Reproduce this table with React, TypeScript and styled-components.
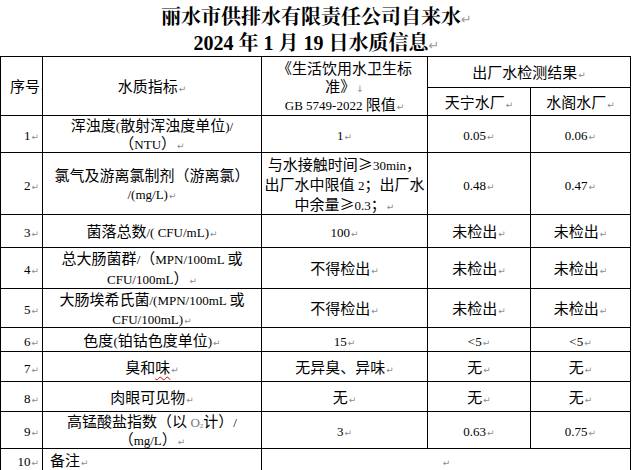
import React from "react";
import styled, { createGlobalStyle } from "styled-components";

const GlobalStyle = createGlobalStyle`
    html, body {
        margin: 0;
        padding: 0;
        background: #fff;
    }
    body {
        font-family: "Noto Sans CJK SC", sans-serif;
        color: #000;
    }
`;

const Page = styled.div`
    width: 633px;
    height: 470px;
    overflow: hidden;
`;

const Title = styled.h1`
    margin: 0;
    padding-top: 4px;
    text-align: center;
    font-family: "Liberation Serif", "Noto Serif CJK SC", "Noto Sans CJK SC", serif;
    font-size: 20px;
    font-weight: 700;
    line-height: 26px;
    height: 52px;
`;

const TitleMark = styled.span`
    font-family: "DejaVu Sans", sans-serif;
    font-size: 13px;
    font-weight: 400;
    line-height: 1;
    color: #9a9a9a;
`;

const Table = styled.table`
    border-collapse: collapse;
    table-layout: fixed;
    width: 630px;
    font-size: 15px;
`;

const Tr = styled.tr<{ $h: number }>`
    height: ${props => props.$h}px;
`;

const Td = styled.td<{ $align?: string; $lh?: number; $pad?: string }>`
    border: 1px solid #000;
    padding: ${props => props.$pad ?? "0 2px"};
    text-align: ${props => props.$align ?? "center"};
    vertical-align: middle;
    line-height: ${props => props.$lh ?? 18}px;
    white-space: nowrap;
    overflow: hidden;
`;

const Latin = styled.span`
    font-family: "Liberation Serif", serif;
    font-size: 13px;
    line-height: 1;
`;

const Mark = styled.span`
    font-family: "DejaVu Sans", sans-serif;
    font-size: 9px;
    line-height: 1;
    color: #8c8c8c;
    margin-left: 1px;
`;

const Squiggle = styled.span`
    text-decoration: underline wavy #e00000;
    text-decoration-thickness: 1px;
    text-underline-offset: 3px;
`;

const Sub = styled.span`
    color: #777;
`;

const Sub2 = styled.sub`
    font-family: "Liberation Serif", serif;
    font-size: 7px;
    line-height: 1;
    vertical-align: -1px;
`;

// split a string into latin / cjk runs so ascii gets the smaller serif face
const txt = (s: string) =>
    s.split(/([\x20-\x7e]+)/).map((part, i) =>
        /^[\x20-\x7e]+$/.test(part) ? <Latin key={i}>{part}</Latin> : part
    );

const Lines: React.FC<{ lines: React.ReactNode[]; mark?: string }> = ({ lines, mark = "↵" }) => (
    <>
        {lines.map((l, i) => (
            <React.Fragment key={i}>
                {i > 0 && <br />}
                {typeof l === "string" ? txt(l) : l}
            </React.Fragment>
        ))}
        {mark && <Mark>{mark}</Mark>}
    </>
);

type Row = {
    no: string;
    name: React.ReactNode[];
    limit: React.ReactNode[];
    a: string;
    b: string;
    h: number;
    lh?: number;
    limitLh?: number;
};

const rows: Row[] = [
    { no: "1", name: ["浑浊度(散射浑浊度单位)/", "（NTU）"], limit: ["1"], a: "0.05", b: "0.06", h: 36 },
    {
        no: "2",
        name: ["氯气及游离氯制剂（游离氯）", "/(mg/L)"],
        limit: ["与水接触时间≥30min，", "出厂水中限值 2；出厂水", "中余量≥0.3；"],
        a: "0.48",
        b: "0.47",
        h: 62,
        limitLh: 20,
    },
    { no: "3", name: ["菌落总数/( CFU/mL)"], limit: ["100"], a: "未检出", b: "未检出", h: 33 },
    { no: "4", name: ["总大肠菌群/（MPN/100mL 或", "CFU/100mL）"], limit: ["不得检出"], a: "未检出", b: "未检出", h: 40, lh: 20 },
    { no: "5", name: ["大肠埃希氏菌/(MPN/100mL 或", "CFU/100mL)"], limit: ["不得检出"], a: "未检出", b: "未检出", h: 39, lh: 19 },
    { no: "6", name: ["色度(铂钴色度单位)"], limit: ["15"], a: "<5", b: "<5", h: 24 },
    {
        no: "7",
        name: [<React.Fragment key="s">臭和<Squiggle>味</Squiggle></React.Fragment>],
        limit: ["无异臭、异味"],
        a: "无",
        b: "无",
        h: 30,
    },
    { no: "8", name: ["肉眼可见物"], limit: ["无"], a: "无", b: "无", h: 30 },
    {
        no: "9",
        name: [
            <React.Fragment key="o">
                高锰酸盐指数（以 <Sub><Latin>O</Latin><Sub2>2</Sub2></Sub>计）<Latin>/</Latin>
            </React.Fragment>,
            "（mg/L）",
        ],
        limit: ["3"],
        a: "0.63",
        b: "0.75",
        h: 37,
    },
];

export default function App() {
    return (
        <Page>
            <GlobalStyle />
            <Title>
                丽水市供排水有限责任公司自来水<TitleMark>↵</TitleMark>
                <br />
                2024 年 1 月 19 日水质信息<TitleMark>↵</TitleMark>
            </Title>
            <Table>
                <colgroup>
                    <col style={{ width: 42 }} />
                    <col style={{ width: 219 }} />
                    <col style={{ width: 166 }} />
                    <col style={{ width: 103 }} />
                    <col style={{ width: 100 }} />
                </colgroup>
                <tbody>
                    <Tr $h={31}>
                        <Td rowSpan={2} $align="left" $pad="0 0 0 9px">
                            <Lines lines={["序号"]} />
                        </Td>
                        <Td rowSpan={2}>
                            <Lines lines={["水质指标"]} />
                        </Td>
                        <Td rowSpan={2} $lh={18}>
                            <Lines lines={["《生活饮用水卫生标", <React.Fragment key="z">准》<Mark>↓</Mark></React.Fragment>, "GB 5749-2022 限值"]} />
                        </Td>
                        <Td colSpan={2}>
                            <Lines lines={["出厂水检测结果"]} />
                        </Td>
                    </Tr>
                    <Tr $h={28}>
                        <Td>
                            <Lines lines={["天宁水厂"]} />
                        </Td>
                        <Td>
                            <Lines lines={["水阁水厂"]} />
                        </Td>
                    </Tr>
                    {rows.map(r => (
                        <Tr key={r.no} $h={r.h}>
                            <Td $align="right" $pad="0 3px 0 0">
                                <Lines lines={[r.no]} />
                            </Td>
                            <Td $lh={r.lh}>
                                <Lines lines={r.name} />
                            </Td>
                            <Td $lh={r.limitLh}>
                                <Lines lines={r.limit} />
                            </Td>
                            <Td>
                                <Lines lines={[r.a]} />
                            </Td>
                            <Td>
                                <Lines lines={[r.b]} />
                            </Td>
                        </Tr>
                    ))}
                    <Tr $h={23}>
                        <Td $align="right" $pad="0 3px 0 0">
                            <Lines lines={["10"]} />
                        </Td>
                        <Td $align="left" $pad="0 0 0 7px">
                            <Lines lines={["备注"]} />
                        </Td>
                        <Td colSpan={3}>
                            <Lines lines={[]} />
                        </Td>
                    </Tr>
                </tbody>
            </Table>
        </Page>
    );
}
